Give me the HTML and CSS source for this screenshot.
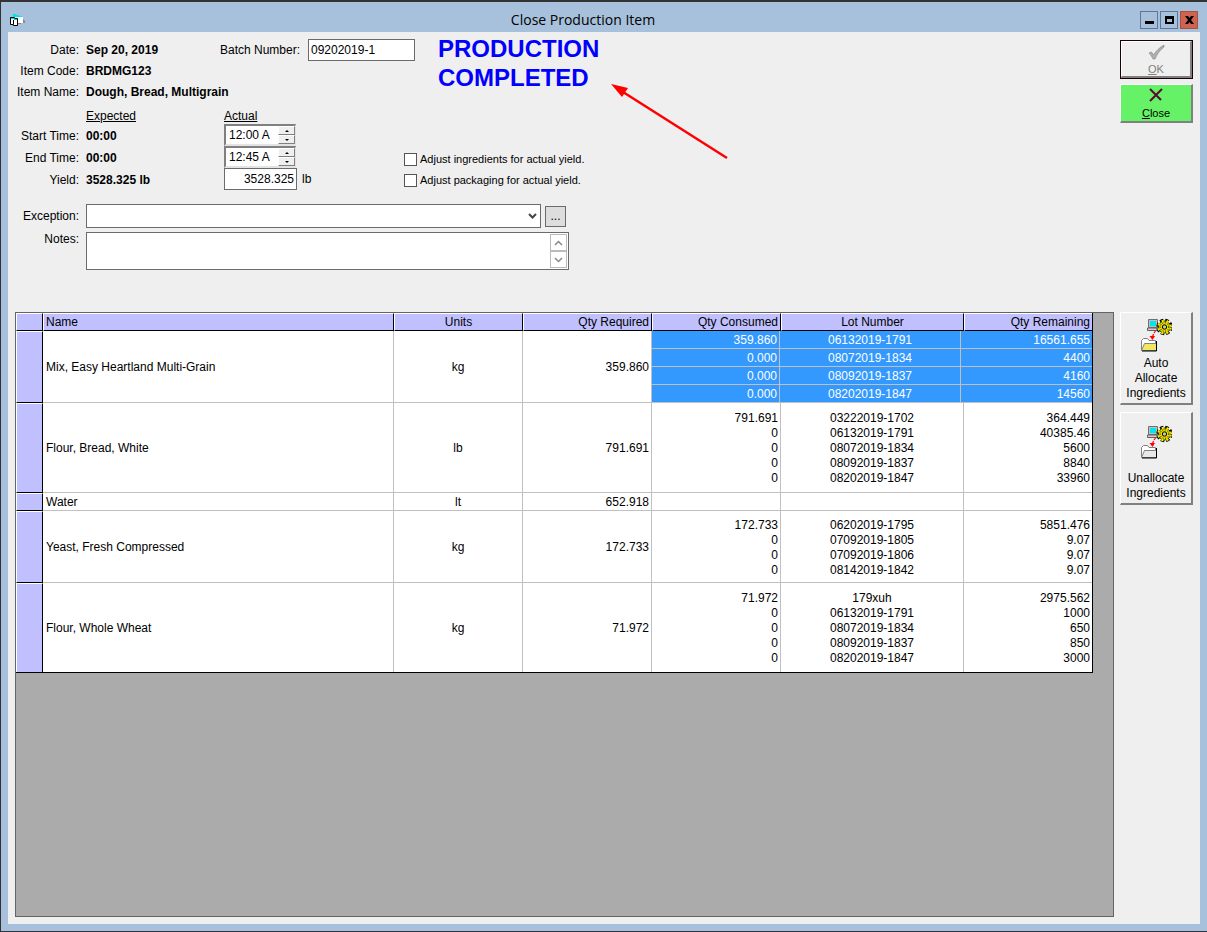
FILE: index.html
```html
<!DOCTYPE html>
<html lang="en">
<head>
    <meta charset="UTF-8">
    <meta name="viewport" content="width=device-width, initial-scale=1.0">
    <title>Close Production Item</title>
    <link rel="stylesheet" href="styles.css">
</head>
<body>
    <!-- Shared icon for the two allocation buttons -->
    <svg width="0" height="0" class="defs" aria-hidden="true">
        <symbol id="allocate-icon" viewBox="0 0 32 34">
            <path d="M8.500 1.500h9v8h-9z" fill="#c0c0c0" stroke="#707070"/>
            <path d="M10 3h6v5h-6z" fill="#00e5ee"/>
            <path d="M7.500 10h11v2.500h-11z" fill="#d0d0d0" stroke="#606060"/>
            <circle cx="24.500" cy="9" r="6.500" fill="none" stroke="#000" stroke-width="3.500" stroke-dasharray="3.300 1.800"/>
            <circle cx="24.500" cy="9" r="6" fill="#e8e000" stroke="#000" stroke-width=".8"/>
            <circle cx="24.500" cy="9" r="6.300" fill="none" stroke="#f0e800" stroke-width="2.200" stroke-dasharray="2.200 2.900" stroke-dashoffset="-.5"/>
            <circle cx="24.500" cy="9" r="4.300" fill="none" stroke="#000" stroke-dasharray="1 1.500"/>
            <circle cx="24.500" cy="9" r="2.200" fill="#c8c880" stroke="#000"/>
            <path d="M15.500 13l-1.500 2M13.500 16l-1 3" fill="none" stroke="#f00" stroke-width="1.200"/>
            <path d="M9.500 18h5.500l-2.500 4z" fill="#f00"/>
            <path d="M1.500 32V22.500l2-2h4l1.500 2h6.500V32z" fill="#fff" stroke="#808080"/>
            <path d="M1.500 32.500l3-7h11l1 1v6z" stroke="#808080"/>
            <path d="M2 33h14.500V23" fill="none" stroke="#000"/>
        </symbol>
    </svg>

    <header class="title-bar">
        <svg class="app-icon" width="16" height="14" viewBox="0 0 16 14">
            <path d="M3 1h3v1h3v1h3v1H3z" fill="#00e5ee"/>
            <path d="M4 4h9v6H8V6H4z" fill="#fff"/>
            <path d="M13 6l2 2v2h-2zM8 10h3v1H8z" fill="#888"/>
            <path d="M.5 4.500h4v1h3v7h-4v-1h-3z" fill="#fff" stroke="#000"/>
            <path d="M1 5.500h3v1h3" fill="none" stroke="#00e5ee"/>
            <path d="M3.500 7v4" stroke="#000"/>
        </svg>
        <h1>Close Production Item</h1>
        <div class="window-buttons">
            <button type="button" aria-label="Minimize"><svg width="16" height="16"><path d="M4 9h9v3H4z"/></svg></button>
            <button type="button" aria-label="Maximize"><svg width="16" height="16"><path d="M4 4h9v8H4zM6 7v3h5V7z" fill-rule="evenodd"/></svg></button>
            <button type="button" class="close-window" aria-label="Close window"><svg width="16" height="16"><path d="M4 4h3l1.500 2L10 4h3l-3 4 3 4h-3l-1.500-2L7 12H4l3-4z"/></svg></button>
        </div>
    </header>

    <main>
        <section class="top">
            <form class="form">
                <div class="block">
                    <div class="fields">
                        <span class="label">Date:</span>
                        <b>Sep 20, 2019</b>
                        <div class="batch">
                            <label for="batch-number">Batch Number:</label>
                            <input type="text" id="batch-number" value="09202019-1">
                        </div>
                        <span class="label">Item Code:</span>
                        <b class="wide">BRDMG123</b>
                        <span class="label">Item Name:</span>
                        <b class="wide">Dough, Bread, Multigrain</b>
                    </div>
                    <p class="status">PRODUCTION<br>COMPLETED</p>
                </div>

                <div class="block">
                    <div class="fields times">
                        <span></span>
                        <u>Expected</u>
                        <u class="actual">Actual</u>
                        <label class="label" for="start-time">Start Time:</label>
                        <b>00:00</b>
                        <div class="actual">
                            <div class="spinner">
                                <input type="text" id="start-time" value="12:00 A">
                                <button type="button" aria-label="Later"><i class="up"></i></button>
                                <button type="button" aria-label="Earlier"><i class="down"></i></button>
                            </div>
                        </div>
                        <label class="label" for="end-time">End Time:</label>
                        <b>00:00</b>
                        <div class="actual">
                            <div class="spinner">
                                <input type="text" id="end-time" value="12:45 A">
                                <button type="button" aria-label="Later"><i class="up"></i></button>
                                <button type="button" aria-label="Earlier"><i class="down"></i></button>
                            </div>
                        </div>
                        <label class="label" for="yield">Yield:</label>
                        <b>3528.325 lb</b>
                        <div class="actual">
                            <input type="text" id="yield" class="yield" value="3528.325">
                            <span>lb</span>
                        </div>
                    </div>
                    <div class="checks">
                        <label><input type="checkbox">Adjust ingredients for actual yield.</label>
                        <label><input type="checkbox">Adjust packaging for actual yield.</label>
                    </div>
                </div>

                <div class="line exception">
                    <label class="label" for="exception">Exception:</label>
                    <div class="select">
                        <select id="exception"><option></option></select>
                        <svg width="9" height="6"><path d="M1 1l3.500 3.500L8 1" fill="none" stroke="#444" stroke-width="2"/></svg>
                    </div>
                    <button type="button" class="more" aria-label="More exceptions">...</button>
                </div>
                <div class="line">
                    <label class="label" for="notes">Notes:</label>
                    <div class="notes">
                        <textarea id="notes"></textarea>
                        <div class="scroll">
                            <button type="button" aria-label="Scroll up"><svg width="9" height="6"><path d="M1 5l3.500-3.500L8 5" fill="none" stroke="#888" stroke-width="1.500"/></svg></button>
                            <button type="button" aria-label="Scroll down"><svg width="9" height="6"><path d="M1 1l3.500 3.500L8 1" fill="none" stroke="#888" stroke-width="1.500"/></svg></button>
                        </div>
                    </div>
                </div>
            </form>

            <div class="side">
                <button type="button" class="btn ok" disabled>
                    <svg width="17" height="15" viewBox="0 0 17 15"><path d="M1 8l2.500-1 2 3C8 6 12 2 16 0v2c-4 3-7 7-9 12H5C4 12 3 10 1 8z" fill="#b0b0b0" stroke="#808080" stroke-width=".6"/></svg>
                    <span><u>O</u>K</span>
                </button>
                <button type="button" class="btn close">
                    <svg width="14" height="14" viewBox="0 0 14 14"><path d="M1 1l11 11M13 1L1 13" stroke="#5a0a30" stroke-width="2"/></svg>
                    <span><u>C</u>lose</span>
                </button>
            </div>

            <svg class="arrow" width="118" height="76" viewBox="0 0 118 76">
                <path d="M12 8l104 66" stroke="#f00" stroke-width="2.500"/>
                <path d="M0 0l17 4-6 9z" fill="#f00"/>
            </svg>
        </section>

        <section class="bottom">
            <div class="grid-panel">
                <table class="items">
                    <colgroup>
                        <col class="c-handle"><col class="c-name"><col class="c-qty"><col class="c-qty"><col class="c-qty"><col class="c-lot"><col class="c-qty">
                    </colgroup>
                    <thead>
                        <tr>
                            <th></th>
                            <th class="left">Name</th>
                            <th>Units</th>
                            <th class="num">Qty Required</th>
                            <th class="num">Qty Consumed</th>
                            <th>Lot Number</th>
                            <th class="num">Qty Remaining</th>
                        </tr>
                    </thead>
                    <tbody>
                        <tr class="lines-4">
                            <th></th>
                            <td class="left">Mix, Easy Heartland Multi-Grain</td>
                            <td>kg</td>
                            <td class="num">359.860</td>
                            <td colspan="3" class="nested">
                                <table class="lots">
                                    <tr><td class="num consumed">359.860</td><td class="lot">06132019-1791</td><td class="num">16561.655</td></tr>
                                    <tr><td class="num">0.000</td><td>08072019-1834</td><td class="num">4400</td></tr>
                                    <tr><td class="num">0.000</td><td>08092019-1837</td><td class="num">4160</td></tr>
                                    <tr><td class="num">0.000</td><td>08202019-1847</td><td class="num">14560</td></tr>
                                </table>
                            </td>
                        </tr>
                        <tr class="lines-5">
                            <th></th>
                            <td class="left">Flour, Bread, White</td>
                            <td>lb</td>
                            <td class="num">791.691</td>
                            <td class="num">791.691<br>0<br>0<br>0<br>0</td>
                            <td>03222019-1702<br>06132019-1791<br>08072019-1834<br>08092019-1837<br>08202019-1847</td>
                            <td class="num">364.449<br>40385.46<br>5600<br>8840<br>33960</td>
                        </tr>
                        <tr>
                            <th></th>
                            <td class="left">Water</td>
                            <td>lt</td>
                            <td class="num">652.918</td>
                            <td></td>
                            <td></td>
                            <td></td>
                        </tr>
                        <tr class="lines-4">
                            <th></th>
                            <td class="left">Yeast, Fresh Compressed</td>
                            <td>kg</td>
                            <td class="num">172.733</td>
                            <td class="num">172.733<br>0<br>0<br>0</td>
                            <td>06202019-1795<br>07092019-1805<br>07092019-1806<br>08142019-1842</td>
                            <td class="num">5851.476<br>9.07<br>9.07<br>9.07</td>
                        </tr>
                        <tr class="lines-5">
                            <th></th>
                            <td class="left">Flour, Whole Wheat</td>
                            <td>kg</td>
                            <td class="num">71.972</td>
                            <td class="num">71.972<br>0<br>0<br>0<br>0</td>
                            <td>179xuh<br>06132019-1791<br>08072019-1834<br>08092019-1837<br>08202019-1847</td>
                            <td class="num">2975.562<br>1000<br>650<br>850<br>3000</td>
                        </tr>
                    </tbody>
                </table>
            </div>

            <div class="side">
                <button type="button" class="btn allocate">
                    <svg class="yellow" width="32" height="34"><use href="#allocate-icon"/></svg>
                    <span>Auto<br>Allocate<br>Ingredients</span>
                </button>
                <button type="button" class="btn allocate">
                    <svg width="32" height="34"><use href="#allocate-icon"/></svg>
                    <span>Unallocate<br>Ingredients</span>
                </button>
            </div>
        </section>
    </main>
</body>
</html>
```
FILE: styles.css
```css
* {
    box-sizing: border-box;
}

body {
    display: flex;
    flex-direction: column;
    min-height: 100vh;
    margin: 0;
    padding: 0 7px 7px;
    border: solid #333;
    border-width: 2px 0 1px 1px;
    background-color: #a7c0dc;
    color: #000;
    font: 12px/15px "Liberation Sans", Arial, sans-serif;
}

button, input, select, textarea {
    margin: 0;
    padding: 0;
    border: none;
    border-radius: 0;
    color: inherit;
    font: inherit;
}

button svg {
    display: block;
}

.defs {
    position: absolute;
}

/* Title bar */
.title-bar {
    display: flex;
    align-items: flex-end;
    height: 30px;
    padding: 0 2px 3px;
}

.app-icon {
    margin-bottom: 2px;
}

.title-bar h1 {
    flex: 1;
    margin: 0;
    text-align: center;
    font: 14px/18px "Open Sans", sans-serif;
}

.window-buttons {
    display: flex;
    gap: 2px;
}

.window-buttons button {
    width: 18px;
    height: 18px;
    border: 1px solid #5f7795;
    background: none;
}

.window-buttons .close-window {
    border-color: #a8503f;
    background-color: #cf6350;
}

main {
    flex: 1;
    display: flex;
    flex-direction: column;
    padding: 0 7px 7px;
    background-color: #efefef;
}

/* Form */
.top {
    position: relative;
    display: flex;
    gap: 6px;
    min-height: 280px;
    padding-top: 7px;
}

.form {
    flex: 1;
}

.block {
    display: flex;
    gap: 7px;
}

.fields {
    display: grid;
    grid-template-columns: 64px 127px 195px;
    grid-auto-rows: 21px;
    column-gap: 7px;
    align-items: center;
}

.fields b,
.fields .label,
.batch label {
    padding-top: 2px;
}

.times {
    grid-template-columns: 64px 127px 177px;
    grid-auto-rows: 22px;
}

.label {
    text-align: right;
    white-space: nowrap;
}

.wide {
    grid-column: span 2;
}

.batch {
    display: flex;
    align-items: center;
    justify-content: space-between;
}

.batch input, .yield {
    width: 107px;
    height: 22px;
    padding: 0 2px;
    border: 1px solid #6b6b6b;
    background-color: #fff;
}

.status {
    margin: -5px 0 0 16px;
    color: #00f;
    font-size: 24px;
    font-weight: bold;
    line-height: 29px;
}

.times u {
    padding-top: 6px;
}

.actual {
    display: flex;
    align-items: center;
    gap: 5px;
    padding-left: 4px;
}

.yield {
    width: 73px;
    text-align: right;
}

.spinner {
    display: grid;
    grid-template-columns: 1fr 17px;
    grid-template-rows: 9px 9px;
    width: 72px;
    height: 22px;
    border: solid #e3e3e3;
    border-width: 2px 1px 2px 2px;
    border-top-color: #808080;
    border-left-color: #808080;
    background-color: #fff;
}

.spinner input {
    grid-row: span 2;
    width: 50px;
    height: 18px;
    padding-left: 3px;
    background: none;
}

.spinner button {
    display: flex;
    align-items: center;
    justify-content: center;
    border: 1px solid #fff;
    border-right-color: #808080;
    border-bottom-color: #808080;
    background-color: #efefef;
}

.spinner i {
    border: 2px solid transparent;
}

.spinner .up {
    margin-top: -2px;
    border-bottom-color: #000;
}

.spinner .down {
    margin-bottom: -2px;
    border-top-color: #000;
}

.checks {
    padding-top: 47px;
    font-size: 11px;
}

.checks label {
    display: flex;
    align-items: center;
    gap: 3px;
    height: 21px;
}

.checks input {
    appearance: none;
    width: 13px;
    height: 13px;
    border: 1px solid #555;
    background-color: #fff;
}

.checks input:checked {
    background-color: #39f;
}

.line {
    display: grid;
    grid-template-columns: 64px 455px 21px;
    column-gap: 7px;
    margin-top: 4px;
}

.exception {
    align-items: center;
    margin-top: 13px;
}

.select {
    position: relative;
}

.select select {
    appearance: none;
    display: block;
    width: 100%;
    height: 24px;
    border: 1px solid #6b6b6b;
    background-color: #fff;
}

.select svg {
    position: absolute;
    right: 4px;
    top: 9px;
    pointer-events: none;
}

.more {
    width: 21px;
    height: 21px;
    margin-left: -3px;
    border: 1px solid #6b6b6b;
    background-color: #ddd;
}

.notes {
    position: relative;
    grid-column: span 2;
}

.notes textarea {
    display: block;
    width: 483px;
    height: 38px;
    padding: 2px 20px 2px 3px;
    border: 1px solid #6b6b6b;
    background-color: #fff;
    resize: none;
}

.scroll {
    position: absolute;
    top: 2px;
    left: 464px;
}

.scroll button {
    display: flex;
    align-items: center;
    justify-content: center;
    width: 17px;
    height: 17px;
    border: 1px solid #bbb;
    background-color: #fff;
}

.arrow {
    position: absolute;
    top: 52px;
    left: 596px;
}

/* Buttons on the right */
.side {
    display: flex;
    flex-direction: column;
    width: 73px;
    gap: 7px;
}

.top .side {
    gap: 5px;
    padding-top: 1px;
}

.btn {
    display: flex;
    flex-direction: column;
    align-items: center;
    border: solid #fff;
    border-width: 1px 2px 2px 1px;
    border-right-color: #808080;
    border-bottom-color: #808080;
    background-color: #efefef;
}

.ok, .close {
    justify-content: space-between;
    height: 39px;
    padding: 3px 0 1px;
    font-size: 11px;
    line-height: 14px;
}

.ok {
    outline: 1px solid #1a0000;
    outline-offset: -1px;
    border-width: 2px 3px 3px 2px;
    padding-bottom: 0;
    color: #808080;
}

.close {
    background-color: #66f266;
}

.allocate {
    height: 93px;
    padding-bottom: 2px;
}

.allocate svg {
    margin: auto;
    fill: #e8e8e8;
}

.allocate .yellow {
    fill: #f0e860;
}

/* Ingredient grid */
.bottom {
    flex: 1;
    display: flex;
    gap: 6px;
}

.grid-panel {
    flex: 1;
    border: 1px solid #646464;
    background-color: #ababab;
}

table {
    border-spacing: 0;
    table-layout: fixed;
}

.items {
    width: 1077px;
    border-right: 1px solid #000;
    border-bottom: 1px solid #000;
    background-color: #fff;
}

.c-handle { width: 27px; }
.c-name { width: 351px; }
.c-qty { width: 129px; }
.c-qty:last-child { width: 128px; }
.c-lot { width: 183px; }

th, td {
    height: 18px;
    padding: 0 2px;
    text-align: center;
    font-weight: normal;
}

td {
    padding-top: 2px;
    border: solid #c0c0c0;
    border-width: 0 1px 1px 0;
}

th {
    border: 1px solid #000;
    border-top-color: #fff;
    border-left-color: #fff;
    background-color: #c0c0ff;
}

.items > thead th:last-child,
.items td:last-child {
    border-right: none;
}

.items > tbody > tr:last-child > * {
    border-bottom: none;
}

.left {
    text-align: left;
}

td.left {
    padding-left: 3px;
}

.num {
    text-align: right;
}

.lines-4 > td { height: 72px; }
.lines-5 > td { height: 90px; }
.lines-5:last-child > td { height: 89px; }

.items .nested {
    padding: 0;
    border: none;
}

/* Selected lots */
.lots {
    width: 100%;
    background-color: #39f;
    color: #fff;
}

.lots .consumed { width: 128px; }
.lots .lot { width: 181px; }
```
